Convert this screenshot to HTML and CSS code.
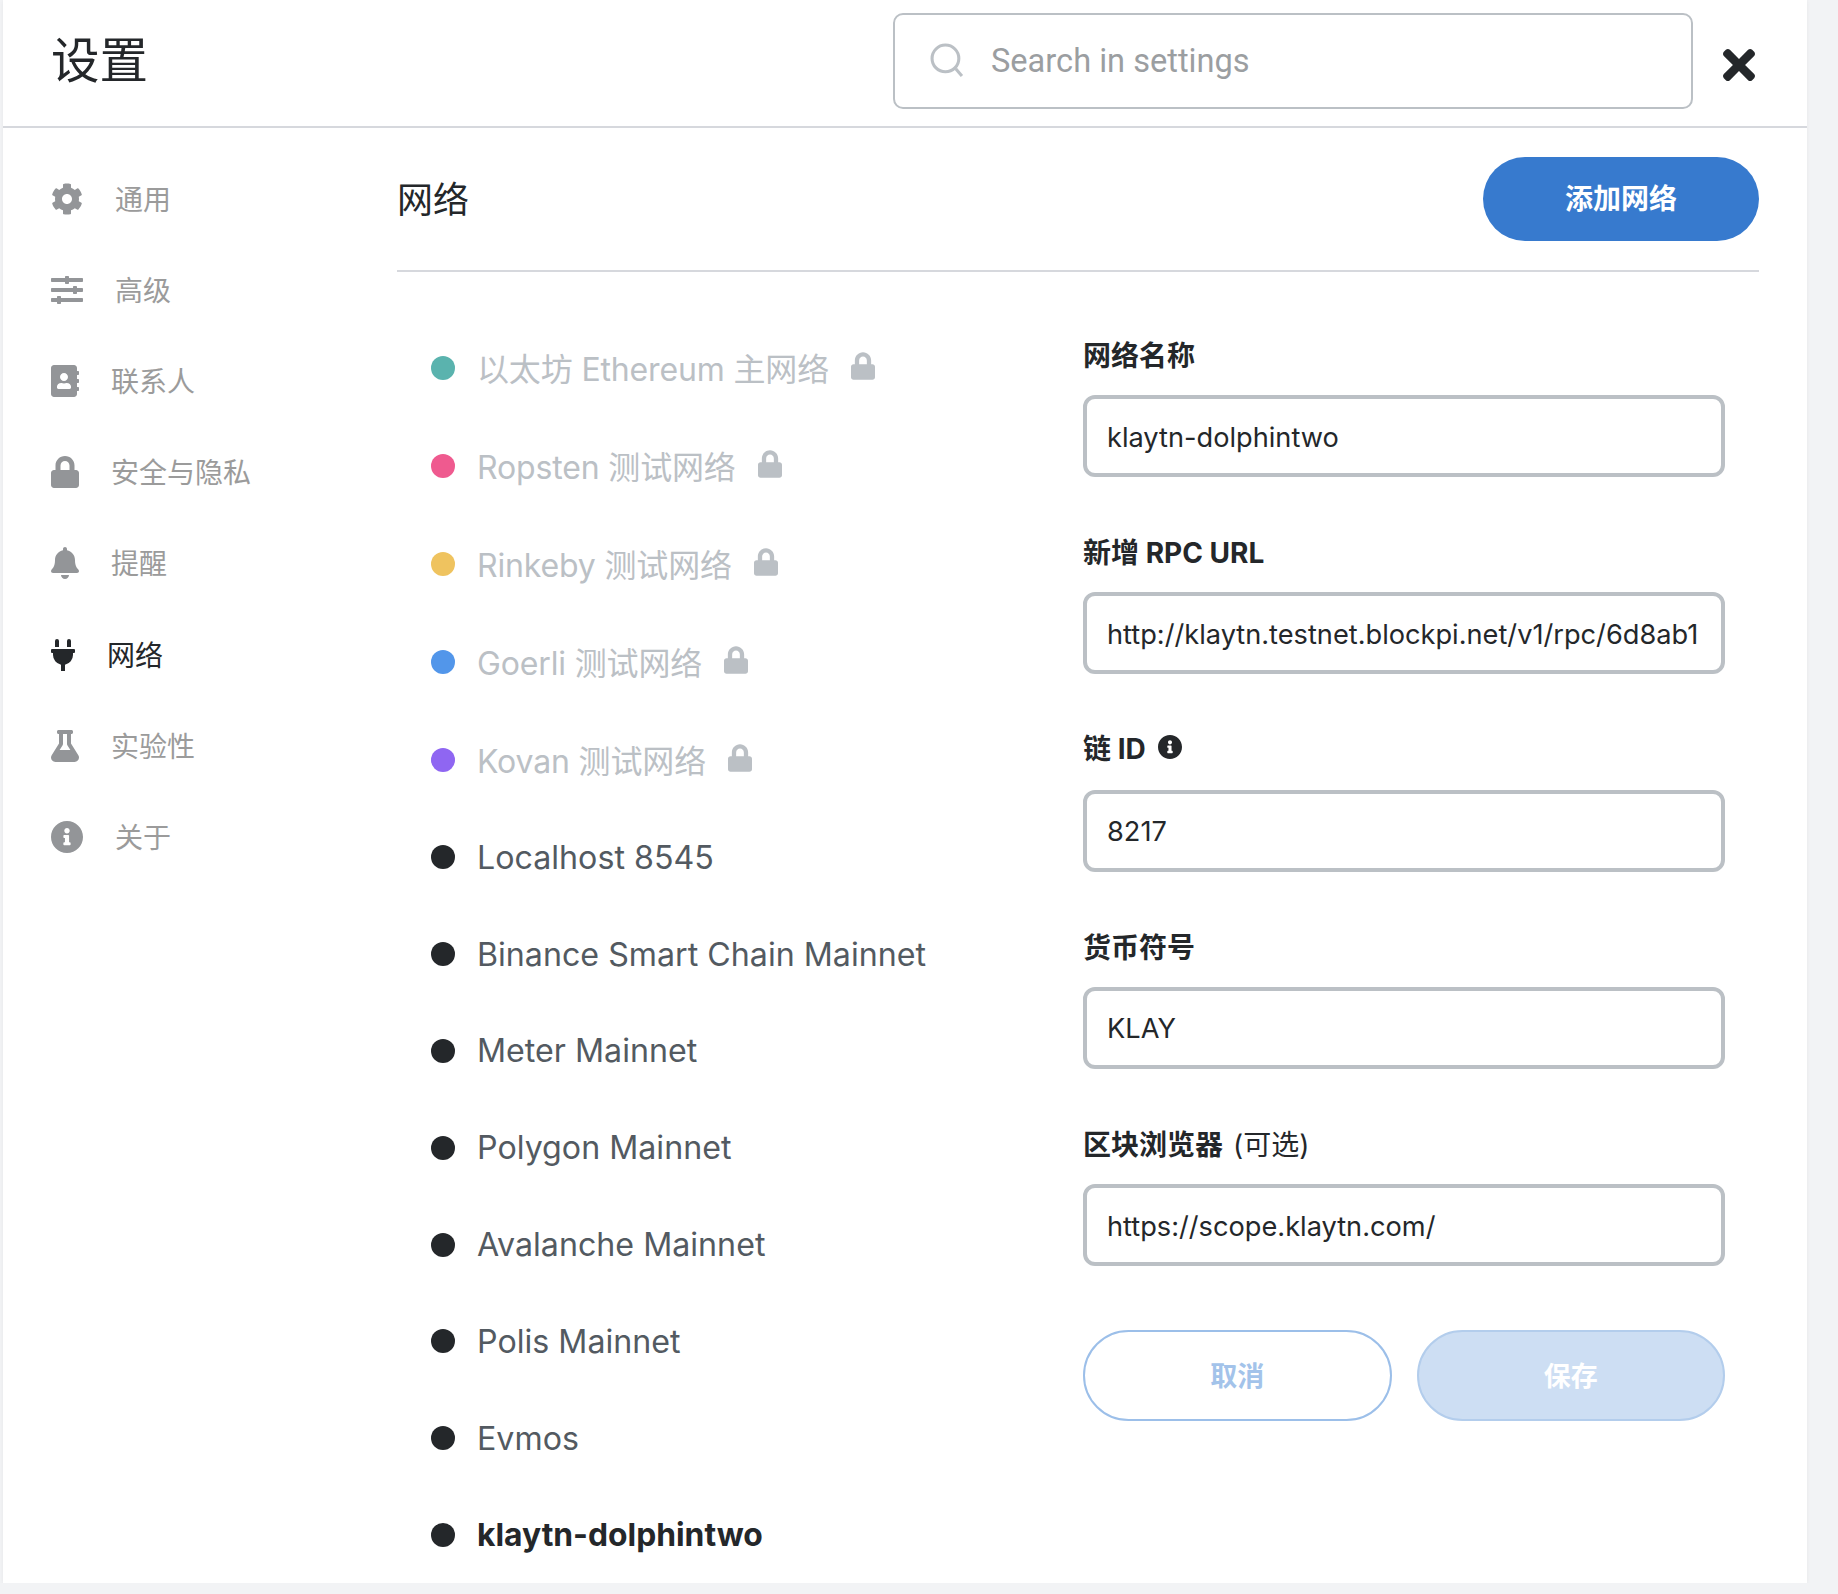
FILE: index.html
```html
<!DOCTYPE html>
<html lang="zh-CN">
<head>
  <meta charset="UTF-8">
  <title>设置</title>
  <link rel="stylesheet" href="styles.css">
</head>
<body>

<svg class="icon-defs" xmlns="http://www.w3.org/2000/svg">
  <symbol id="i-cog" viewBox="0 0 512 512"><path d="M487.4 315.7l-42.6-24.6c4.3-23.2 4.3-47 0-70.2l42.6-24.6c4.9-2.8 7.1-8.6 5.5-14-11.1-35.6-30-67.8-54.7-94.6-3.8-4.1-10-5.1-14.8-2.3L380.8 110c-17.9-15.4-38.5-27.3-60.8-35.1V25.8c0-5.6-3.9-10.5-9.4-11.7-36.7-8.2-74.3-7.8-109.2 0-5.5 1.2-9.4 6.1-9.4 11.7V75c-22.2 7.9-42.8 19.8-60.8 35.1L88.7 85.5c-4.9-2.8-11-1.9-14.8 2.3-24.7 26.7-43.6 58.9-54.7 94.6-1.7 5.4.6 11.2 5.5 14L67.3 221c-4.3 23.2-4.3 47 0 70.2l-42.6 24.6c-4.9 2.8-7.1 8.6-5.5 14 11.1 35.6 30 67.8 54.7 94.6 3.8 4.1 10 5.1 14.8 2.3l42.6-24.6c17.9 15.4 38.5 27.3 60.8 35.1v49.2c0 5.6 3.9 10.5 9.4 11.7 36.7 8.2 74.3 7.8 109.2 0 5.5-1.2 9.4-6.1 9.4-11.7v-49.2c22.2-7.9 42.8-19.8 60.8-35.1l42.6 24.6c4.9 2.8 11 1.9 14.8-2.3 24.7-26.7 43.6-58.9 54.7-94.6 1.5-5.5-.7-11.3-5.6-14.1zM256 336c-44.1 0-80-35.9-80-80s35.9-80 80-80 80 35.9 80 80-35.9 80-80 80z"/></symbol>
  <symbol id="i-sliders" viewBox="0 0 512 512"><path d="M496 384H160v-16c0-8.8-7.2-16-16-16h-32c-8.8 0-16 7.2-16 16v16H16c-8.8 0-16 7.2-16 16v32c0 8.8 7.2 16 16 16h80v16c0 8.8 7.2 16 16 16h32c8.8 0 16-7.2 16-16v-16h336c8.8 0 16-7.2 16-16v-32c0-8.8-7.2-16-16-16zm0-160h-80v-16c0-8.8-7.2-16-16-16h-32c-8.8 0-16 7.2-16 16v16H16c-8.8 0-16 7.2-16 16v32c0 8.8 7.2 16 16 16h336v16c0 8.8 7.2 16 16 16h32c8.8 0 16-7.2 16-16v-16h80c8.8 0 16-7.2 16-16v-32c0-8.8-7.2-16-16-16zm0-160H288V48c0-8.8-7.2-16-16-16h-32c-8.8 0-16 7.2-16 16v16H16C7.2 64 0 71.2 0 80v32c0 8.8 7.2 16 16 16h208v16c0 8.8 7.2 16 16 16h32c8.8 0 16-7.2 16-16v-16h208c8.8 0 16-7.2 16-16V80c0-8.8-7.2-16-16-16z"/></symbol>
  <symbol id="i-book" viewBox="0 0 448 512"><path d="M436 160c6.6 0 12-5.4 12-12v-40c0-6.6-5.4-12-12-12h-20V48c0-26.5-21.5-48-48-48H48C21.5 0 0 21.5 0 48v416c0 26.5 21.5 48 48 48h320c26.5 0 48-21.5 48-48v-48h20c6.6 0 12-5.4 12-12v-40c0-6.6-5.4-12-12-12h-20v-64h20c6.6 0 12-5.4 12-12v-40c0-6.6-5.4-12-12-12h-20v-64h20zm-228-32c35.3 0 64 28.7 64 64s-28.7 64-64 64-64-28.7-64-64 28.7-64 64-64zm112 236.8c0 10.6-10 19.2-22.4 19.2H118.4C106 384 96 375.4 96 364.8v-19.2c0-31.8 30.1-57.6 67.2-57.6h5c12.3 5.1 25.7 8 39.8 8s27.6-2.9 39.8-8h5c37.1 0 67.2 25.8 67.2 57.6v19.2z"/></symbol>
  <symbol id="i-lock" viewBox="0 0 448 512"><path d="M400 224h-24v-72C376 68.2 307.8 0 224 0S72 68.2 72 152v72H48c-26.5 0-48 21.5-48 48v192c0 26.5 21.5 48 48 48h352c26.5 0 48-21.5 48-48V272c0-26.5-21.5-48-48-48zm-104 0H152v-72c0-39.7 32.3-72 72-72s72 32.3 72 72v72z"/></symbol>
  <symbol id="i-bell" viewBox="0 0 448 512"><path d="M224 512c35.32 0 63.97-28.65 63.97-64H160.03c0 35.35 28.65 64 63.97 64zm215.39-149.71c-19.32-20.76-55.47-51.99-55.47-154.29 0-77.7-54.48-139.9-127.94-155.16V32c0-17.67-14.32-32-31.98-32s-31.98 14.33-31.98 32v20.84C118.56 68.1 64.08 130.3 64.08 208c0 102.3-36.15 133.53-55.47 154.29-6 6.45-8.66 14.16-8.61 21.71.11 16.4 12.98 32 32.1 32h383.8c19.12 0 32-15.6 32.1-32 .05-7.55-2.61-15.27-8.61-21.71z"/></symbol>
  <symbol id="i-plug" viewBox="0 0 384 512"><path d="M320 32a32 32 0 0 0-64 0v96h64Zm48 128H16A16 16 0 0 0 0 176v32a16 16 0 0 0 16 16H32v32A160.07 160.07 0 0 0 160 412.8V512h64V412.8A160.07 160.07 0 0 0 352 256V224h16a16 16 0 0 0 16-16V176A16 16 0 0 0 368 160ZM128 32a32 32 0 0 0-64 0v96h64Z"/></symbol>
  <symbol id="i-flask" viewBox="0 0 448 512"><path d="M437.2 403.5L320 215V64h8c13.3 0 24-10.7 24-24V24c0-13.3-10.7-24-24-24H120c-13.3 0-24 10.7-24 24v16c0 13.3 10.7 24 24 24h8v151L10.8 403.5C-18.5 450.6 15.3 512 70.9 512h306.2c55.7 0 89.4-61.5 60.1-108.5zM137.9 320l48.2-77.6c3.7-5.2 5.8-11.6 5.8-18.4V64h64v160c0 6.9 2.2 13.2 5.8 18.4l48.2 77.6h-172z"/></symbol>
  <symbol id="i-info" viewBox="8 8 496 496"><path d="M256 8C119.043 8 8 119.083 8 256c0 136.997 111.043 248 248 248s248-111.003 248-248C504 119.083 392.957 8 256 8zm0 110c23.196 0 42 18.804 42 42s-18.804 42-42 42-42-18.804-42-42 18.804-42 42-42zm56 254c0 6.627-5.373 12-12 12h-88c-6.627 0-12-5.373-12-12v-24c0-6.627 5.373-12 12-12h12v-64h-12c-6.627 0-12-5.373-12-12v-24c0-6.627 5.373-12 12-12h64c6.627 0 12 5.373 12 12v100h12c6.627 0 12 5.373 12 12v24z"/></symbol>
  <symbol id="i-times" viewBox="0 80 352 352"><path d="M242.72 256l100.07-100.07c12.28-12.28 12.28-32.19 0-44.48l-22.24-22.24c-12.28-12.28-32.19-12.28-44.48 0L176 189.28 75.93 89.21c-12.28-12.28-32.19-12.28-44.48 0L9.21 111.45c-12.28 12.28-12.28 32.19 0 44.48L109.28 256 9.21 356.07c-12.28 12.28-12.28 32.19 0 44.48l22.24 22.24c12.28 12.28 32.2 12.28 44.48 0L176 322.72l100.07 100.07c12.28 12.28 32.2 12.28 44.48 0l22.24-22.24c12.28-12.28 12.28-32.19 0-44.48L242.72 256z"/></symbol>
</svg>

<div class="panel">
  <header class="topbar">
    <h1 class="title">设置</h1>
    <div class="search">
      <svg class="search-icon" viewBox="0 0 34 34" fill="none" stroke="#bbc0c5" stroke-width="3"><circle cx="15" cy="15" r="13"/><path d="M25 25l6 7"/></svg>
      <input class="search-input" type="text" placeholder="Search in settings">
    </div>
    <svg class="close-icon"><use href="#i-times"/></svg>
  </header>

  <div class="main">
    <nav class="sidebar">
      <a class="nav-item"><svg class="nav-icon wide"><use href="#i-cog"/></svg>通用</a>
      <a class="nav-item"><svg class="nav-icon wide"><use href="#i-sliders"/></svg>高级</a>
      <a class="nav-item"><svg class="nav-icon"><use href="#i-book"/></svg>联系人</a>
      <a class="nav-item"><svg class="nav-icon"><use href="#i-lock"/></svg>安全与隐私</a>
      <a class="nav-item"><svg class="nav-icon"><use href="#i-bell"/></svg>提醒</a>
      <a class="nav-item active"><svg class="nav-icon plug"><use href="#i-plug"/></svg>网络</a>
      <a class="nav-item"><svg class="nav-icon"><use href="#i-flask"/></svg>实验性</a>
      <a class="nav-item"><svg class="nav-icon wide"><use href="#i-info"/></svg>关于</a>
    </nav>

    <section class="content">
      <div class="content-head">
        <h2 class="content-title">网络</h2>
        <button class="btn-add">添加网络</button>
      </div>

      <div class="columns">
        <ul class="net-list">
          <li class="net locked"><span class="dot teal"></span>以太坊 Ethereum 主网络<svg class="lock"><use href="#i-lock"/></svg></li>
          <li class="net locked"><span class="dot pink"></span>Ropsten 测试网络<svg class="lock"><use href="#i-lock"/></svg></li>
          <li class="net locked"><span class="dot yellow"></span>Rinkeby 测试网络<svg class="lock"><use href="#i-lock"/></svg></li>
          <li class="net locked"><span class="dot blue"></span>Goerli 测试网络<svg class="lock"><use href="#i-lock"/></svg></li>
          <li class="net locked"><span class="dot purple"></span>Kovan 测试网络<svg class="lock"><use href="#i-lock"/></svg></li>
          <li class="net"><span class="dot"></span>Localhost 8545</li>
          <li class="net"><span class="dot"></span>Binance Smart Chain Mainnet</li>
          <li class="net"><span class="dot"></span>Meter Mainnet</li>
          <li class="net"><span class="dot"></span>Polygon Mainnet</li>
          <li class="net"><span class="dot"></span>Avalanche Mainnet</li>
          <li class="net"><span class="dot"></span>Polis Mainnet</li>
          <li class="net"><span class="dot"></span>Evmos</li>
          <li class="net current"><span class="dot"></span>klaytn-dolphintwo</li>
        </ul>

        <form class="net-form">
          <div class="field">
            <label class="field-label">网络名称</label>
            <input class="field-input" type="text" value="klaytn-dolphintwo">
          </div>
          <div class="field">
            <label class="field-label">新增 RPC URL</label>
            <input class="field-input" type="text" value="http://klaytn.testnet.blockpi.net/v1/rpc/6d8ab1">
          </div>
          <div class="field">
            <label class="field-label chain">链 ID<svg class="label-info"><use href="#i-info"/></svg></label>
            <input class="field-input" type="text" value="8217">
          </div>
          <div class="field">
            <label class="field-label">货币符号</label>
            <input class="field-input" type="text" value="KLAY">
          </div>
          <div class="field">
            <label class="field-label">区块浏览器<span class="optional">(可选)</span></label>
            <input class="field-input" type="text" value="https://scope.klaytn.com/">
          </div>
          <div class="form-actions">
            <button type="button" class="btn-cancel">取消</button>
            <button type="button" class="btn-save">保存</button>
          </div>
        </form>
      </div>
    </section>
  </div>
</div>

</body>
</html>
```

FILE: styles.css
```css
* {
  box-sizing: border-box;
}
body {
  margin: 0;
  background: #f2f3f5;
  font-family: "Inter", "Noto Sans CJK SC", sans-serif;
  color: #24272a;
}
.icon-defs {
  display: none;
}
.panel {
  width: 1804px;
  height: 1583px;
  margin-left: 3px;
  background: white;
  overflow: hidden;
  box-shadow: 0 1px 4px rgba(0,0,0,0.05);
}

/* top bar */
.topbar {
  display: flex;
  align-items: flex-start;
  height: 128px;
  padding: 13px 0 0 48px;
  border-bottom: 2px solid #d6d8dd;
}
.title {
  flex: 1;
  margin: 11px 0 0;
  font-size: 48.5px;
  line-height: 66px;
  font-weight: 400;
  font-family: "Noto Sans CJK SC", sans-serif;
}
.search {
  display: flex;
  align-items: center;
  width: 800px;
  height: 96px;
  padding: 0 0 1px 35px;
  border: 2px solid #bbc0c5;
  border-radius: 10px;
}
.search-icon {
  width: 35px;
  height: 35px;
  flex: none;
}
.search-input {
  flex: 1;
  margin-left: 24px;
  border: none;
  outline: none;
  background: none;
  font-family: "Roboto", sans-serif;
  font-size: 32.6px;
}
.search-input::placeholder {
  color: #9b9ea1;
}
.close-icon {
  width: 32px;
  height: 32px;
  margin: 36px 52px 0 30px;
  fill: #24272a;
}

.main {
  display: flex;
}

/* left menu */
.sidebar {
  width: 394px;
  flex: none;
  padding: 25px 0 0 48px;
}
.nav-item {
  display: flex;
  align-items: center;
  height: 91.2px;
  padding-bottom: 2px;
  font-size: 28px;
  color: #9b9b9b;
  font-family: "Noto Sans CJK SC", sans-serif;
}
.nav-item.active {
  color: #24272a;
}
.nav-icon {
  width: 28px;
  height: 32px;
  margin: 2px 32px 0 0;
  fill: #939598;
}
.nav-icon.wide {
  width: 32px;
}
.nav-icon.plug {
  width: 24px;
}
.nav-item.active .nav-icon {
  fill: #24272a;
}

/* right part */
.content {
  width: 1362px;
}
.content-head {
  display: flex;
  align-items: center;
  justify-content: space-between;
  height: 144px;
  padding-top: 29px;
  padding-bottom: 29px;
  border-bottom: 2px solid #d6d8dd;
}
.content-title {
  margin: -4px 0 0;
  font-size: 36px;
  font-weight: 400;
  font-family: "Noto Sans CJK SC", sans-serif;
}
.btn-add {
  width: 276px;
  height: 84px;
  padding-bottom: 6px;
  border: none;
  border-radius: 42px;
  background: #377ace;
  color: white;
  font-size: 28px;
  font-weight: 700;
  font-family: "Noto Sans CJK SC", sans-serif;
}
.columns {
  display: grid;
  grid-template-columns: 686px 642px;
}

/* network list */
.net-list {
  list-style: none;
  margin: 0;
  padding: 47px 0 0 34px;
}
.net {
  display: flex;
  align-items: center;
  height: 96.8px;
  font-size: 32.2px;
  color: #535a61;
  white-space: pre;
}
.net.locked {
  height: 98px;
  padding-bottom: 3px;
  font-size: 32px;
  letter-spacing: -0.15px;
  color: #bbc0c5;
}
.net.current {
  font-size: 31.8px;
  color: #24272a;
  font-weight: 700;
}
.dot {
  width: 24px;
  height: 24px;
  margin-right: 22px;
  border-radius: 50%;
  background: #24272a;
}
.locked .dot {
  margin-top: 3px;
}
.dot.teal { background: #5ab3ae; }
.dot.pink { background: #ef5a8f; }
.dot.yellow { background: #efc35f; }
.dot.blue { background: #5296ea; }
.dot.purple { background: #8f66f2; }
.lock {
  width: 24px;
  height: 28px;
  margin: -1px 0 0 22px;
  fill: #bbc0c5;
}

/* form */
.net-form {
  padding-top: 64px;
}
.field {
  margin-bottom: 56.3px;
}
.field-label {
  display: flex;
  align-items: center;
  height: 36px;
  margin-bottom: 23px;
  font-size: 28px;
  font-weight: 700;
}
.field-label.chain {
  padding-bottom: 3px;
}
.optional {
  font-weight: 400;
  margin-left: 10px;
}
.label-info {
  width: 24px;
  height: 24px;
  margin-left: 12px;
  fill: #24272a;
}
.field-input {
  display: block;
  width: 100%;
  height: 82px;
  padding: 2px 20px 0;
  border: 4px solid #bbc0c5;
  border-radius: 12px;
  outline: none;
  font-family: "Inter", sans-serif;
  font-size: 27.2px;
  color: #24272a;
}
.form-actions {
  display: flex;
  gap: 25px;
  margin-top: 64px;
}
.btn-cancel, .btn-save {
  flex: 1;
  height: 91px;
  padding-bottom: 4px;
  border-radius: 46px;
  font-size: 27px;
  font-weight: 700;
  font-family: "Noto Sans CJK SC", sans-serif;
}
.btn-cancel {
  border: 2px solid #9cbfe9;
  background: white;
  color: #a3c3ea;
}
.btn-save {
  border: 2px solid #b3cdec;
  background: #cddef3;
  color: white;
}
```
